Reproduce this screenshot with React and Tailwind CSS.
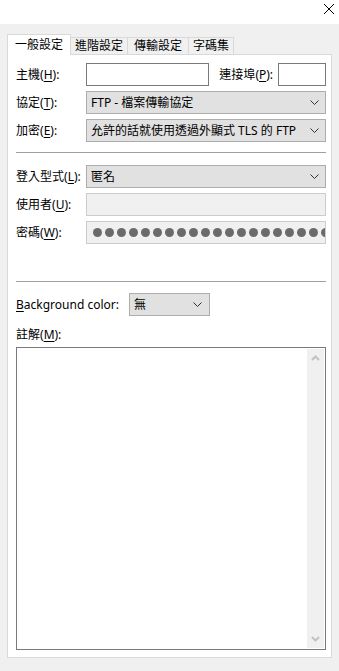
import React from "react";

const FONT = { fontFamily: '"Noto Sans", "Noto Sans CJK TC", sans-serif' };

function Chevron({ color = "#333" }) {
  return (
    <svg width="9" height="5" viewBox="0 0 9 5" className="block shrink-0">
      <path d="M0.5 0.5 L4.5 4.5 L8.5 0.5" fill="none" stroke={color} strokeWidth="1" />
    </svg>
  );
}

function Select({ children, className = "" }) {
  return (
    <div className={"h-[23px] bg-[#e1e1e1] border border-[#adadad] flex items-center pl-[4px] pr-[6px] " + className}>
      <span className="flex-1 text-[12px] leading-[16px] whitespace-nowrap">{children}</span>
      <Chevron />
    </div>
  );
}

function Label({ pre, u, post = "):" }) {
  return (
    <span className="text-[12px] leading-[14px] whitespace-nowrap">
      {pre}(<span className="underline underline-offset-2">{u}</span>{post}
    </span>
  );
}

function Row({ children, className = "" }) {
  return <div className={"flex items-center h-[23px] text-[12px] leading-[14px] " + className}>{children}</div>;
}

export default function App() {
  const dots = Array.from({ length: 20 });
  return (
    <div style={FONT} className="w-[339px] h-[671px] bg-[#f0f0f0] flex flex-col text-black overflow-hidden text-[12px] leading-[14px]">
      <div className="h-[24px] bg-white flex justify-end pr-[5px] pt-[4px] shrink-0">
        <svg width="10" height="10" viewBox="0 0 10 10" className="block">
          <path d="M0 0 L10 10 M10 0 L0 10" stroke="#000" strokeWidth="1" />
        </svg>
      </div>
      <div className="flex-1 flex flex-col pt-[10px] pl-[7px] pr-[7px] pb-[13px] min-h-0">
        <div className="flex items-end h-[20px] shrink-0">
          <div className="relative z-10 h-[21px] mb-[-1px] w-[64px] bg-white border border-b-0 border-[#d9d9d9] flex items-center justify-center pb-[1px]">
            一般設定
          </div>
          <div className="h-[17px] w-[58px] ml-[-1px] bg-[#f0f0f0] border border-b-0 border-[#d9d9d9] flex items-center justify-center">
            進階設定
          </div>
          <div className="h-[17px] w-[62px] ml-[-1px] bg-[#f0f0f0] border border-b-0 border-[#d9d9d9] flex items-center justify-center">
            傳輸設定
          </div>
          <div className="h-[17px] w-[46px] ml-[-1px] bg-[#f0f0f0] border border-b-0 border-[#d9d9d9] flex items-center justify-center">
            字碼集
          </div>
        </div>
        <div className="flex-1 min-h-0 bg-white border border-[#d9d9d9] pl-[8px] pr-[5px] pt-[8px] pb-[7px] flex flex-col">
          <Row>
            <div className="w-[70px]"><Label pre="主機" u="H" /></div>
            <div className="w-[124px] h-[23px] border border-[#7a7a7a] bg-white" />
            <div className="ml-[10px] w-[59px]"><Label pre="連接埠" u="P" /></div>
            <div className="w-[48px] h-[23px] border border-[#7a7a7a] bg-white" />
          </Row>
          <Row className="mt-[5px]">
            <div className="w-[70px]"><Label pre="協定" u="T" /></div>
            <Select className="flex-1">FTP - 檔案傳輸協定</Select>
          </Row>
          <Row className="mt-[5px]">
            <div className="w-[70px]"><Label pre="加密" u="E" /></div>
            <Select className="flex-1">允許的話就使用透過外顯式 TLS 的 FTP</Select>
          </Row>
          <div className="h-px bg-[#a0a0a0] mt-[10px] mb-[12px] shrink-0" />
          <Row>
            <div className="w-[70px]"><Label pre="登入型式" u="L" /></div>
            <Select className="flex-1">匿名</Select>
          </Row>
          <Row className="mt-[5px]">
            <div className="w-[70px]"><Label pre="使用者" u="U" /></div>
            <div className="flex-1 h-[23px] border border-[#cccccc] bg-[#f0f0f0]" />
          </Row>
          <Row className="mt-[5px]">
            <div className="w-[70px]"><Label pre="密碼" u="W" /></div>
            <div className="flex-1 min-w-0 h-[23px] border border-[#cccccc] bg-[#f0f0f0] overflow-hidden flex items-center pl-[6px]">
              <div className="flex gap-[3px] shrink-0">
                {dots.map((_, i) => (
                  <div key={i} className="w-[9px] h-[9px] rounded-full bg-[#6b6b6b] shrink-0" />
                ))}
              </div>
            </div>
          </Row>
          <div className="h-px bg-[#a0a0a0] mt-[37px] mb-[11px] shrink-0" />
          <Row>
            <span className="whitespace-nowrap w-[113px]">
              <span className="underline underline-offset-2">B</span>ackground color:
            </span>
            <div className="w-[81px] h-[23px] bg-[#e1e1e1] border border-[#adadad] flex items-center pl-[4px] pr-[7px]">
              <span className="flex-1 leading-[16px]">無</span>
              <Chevron />
            </div>
          </Row>
          <div className="mt-[12px] h-[14px] flex items-center shrink-0">
            <Label pre="註解" u="M" />
          </div>
          <div className="mt-[5px] flex-1 min-h-0 border border-[#7a7a7a] bg-white flex justify-end p-px">
            <div className="w-[17px] bg-[#f0f0f0] flex flex-col justify-between items-center py-[6px]">
              <svg width="9" height="6" viewBox="0 0 9 6" className="block">
                <path d="M1 5 L4.5 1.5 L8 5" fill="none" stroke="#c2c2c2" strokeWidth="2" />
              </svg>
              <svg width="9" height="6" viewBox="0 0 9 6" className="block">
                <path d="M1 1 L4.5 4.5 L8 1" fill="none" stroke="#c2c2c2" strokeWidth="2" />
              </svg>
            </div>
          </div>
        </div>
      </div>
    </div>
  );
}
